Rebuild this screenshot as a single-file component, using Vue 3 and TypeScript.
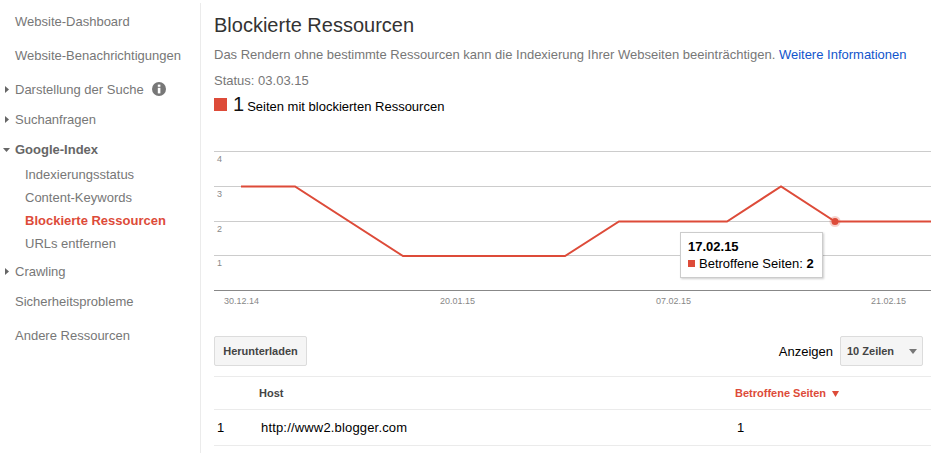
<script setup lang="ts">
interface NavItem {
  label: string
  kind: 'top' | 'tree' | 'open' | 'sub' | 'active'
  arrow?: boolean
  info?: boolean
}
const nav: NavItem[] = [
  { label: 'Website-Dashboard', kind: 'top' },
  { label: 'Website-Benachrichtigungen', kind: 'top' },
  { label: 'Darstellung der Suche', kind: 'tree', arrow: true, info: true },
  { label: 'Suchanfragen', kind: 'tree', arrow: true },
  { label: 'Google-Index', kind: 'open' },
  { label: 'Indexierungsstatus', kind: 'sub' },
  { label: 'Content-Keywords', kind: 'sub' },
  { label: 'Blockierte Ressourcen', kind: 'active' },
  { label: 'URLs entfernen', kind: 'sub' },
  { label: 'Crawling', kind: 'tree', arrow: true },
  { label: 'Sicherheitsprobleme', kind: 'top' },
  { label: 'Andere Ressourcen', kind: 'top' },
]
const grid = [
  { y: 11.5, label: '4', ly: 22 },
  { y: 46.5, label: '3', ly: 57 },
  { y: 81.5, label: '2', ly: 92 },
  { y: 115.5, label: '1', ly: 126 },
]
const xLabels = [
  { x: 10, label: '30.12.14' },
  { x: 226, label: '20.01.15' },
  { x: 442, label: '07.02.15' },
  { x: 657, label: '21.02.15' },
]
const line = '27,46.5 81,46.5 189,116 351,116 405,81.5 513,81.5 567,46.5 621,81.5 717,81.5'
</script>

<template>
  <div class="page">
    <aside class="sidebar">
      <div v-for="item in nav" :key="item.label" class="nav-item" :class="item.kind">
        <svg v-if="item.arrow" class="arrow" width="4" height="7" viewBox="0 0 4 7"><path d="M0 0L4 3.5L0 7Z" /></svg>
        <svg v-if="item.kind === 'open'" class="arrow down" width="7" height="4" viewBox="0 0 7 4"><path d="M0 0H7L3.5 4Z" /></svg>
        <span>{{ item.label }}</span>
        <svg v-if="item.info" class="info" width="14" height="14" viewBox="0 0 14 14">
          <circle cx="7" cy="7" r="7" fill="#777" />
          <rect x="5.8" y="2.6" width="2.6" height="2.2" fill="#fff" />
          <rect x="5.8" y="5.8" width="2.6" height="5.6" fill="#fff" />
        </svg>
      </div>
    </aside>

    <main class="main">
      <h1 class="title">Blockierte Ressourcen</h1>
      <p class="desc">
        Das Rendern ohne bestimmte Ressourcen kann die Indexierung Ihrer Webseiten beeinträchtigen.
        <a class="link">Weitere Informationen</a>
      </p>
      <p class="status">Status: 03.03.15</p>
      <div class="legend">
        <span class="swatch"></span>
        <span class="count">1</span>
        <span class="legend-text">Seiten mit blockierten Ressourcen</span>
      </div>

      <div class="chart">
        <svg width="717" height="170" viewBox="0 0 717 170">
          <line v-for="g in grid" :key="g.y" x1="0" x2="717" :y1="g.y" :y2="g.y" stroke="#ccc" />
          <line x1="0" x2="717" y1="150.5" y2="150.5" stroke="#888" />
          <text v-for="g in grid" :key="g.label" x="3" :y="g.ly" class="axis">{{ g.label }}</text>
          <text v-for="l in xLabels" :key="l.label" :x="l.x" y="164" class="axis">{{ l.label }}</text>
          <polyline :points="line" fill="none" stroke="#dd4b39" stroke-width="2" />
          <circle cx="621" cy="81.5" r="5.5" fill="#dd4b39" opacity="0.25" />
          <circle cx="621" cy="81.5" r="3.5" fill="#dd4b39" />
        </svg>
        <div class="tooltip">
          <div class="tip-date">17.02.15</div>
          <div class="tip-row"><span class="tip-swatch"></span>Betroffene Seiten: <b>2</b></div>
        </div>
      </div>

      <div class="toolbar">
        <button class="btn">Herunterladen</button>
        <div class="show">
          <span>Anzeigen</span>
          <div class="select">
            <span>10 Zeilen</span>
            <svg width="8" height="5" viewBox="0 0 8 5"><path d="M0 0H8L4 5Z" fill="#777" /></svg>
          </div>
        </div>
      </div>

      <table class="table">
        <thead>
          <tr>
            <th class="c-num"></th>
            <th class="c-host">Host</th>
            <th class="c-pages">
              Betroffene Seiten
              <svg class="sort" width="7" height="6" viewBox="0 0 7 6"><path d="M0 0H7L3.5 6Z" fill="#dd4b39" /></svg>
            </th>
          </tr>
        </thead>
        <tbody>
          <tr>
            <td class="c-num">1</td>
            <td class="c-host url">http://www2.blogger.com</td>
            <td class="c-pages val">1</td>
          </tr>
        </tbody>
      </table>
    </main>
  </div>
</template>

<style>
html, body { margin: 0; background: #fff; overflow: hidden; }
</style>

<style scoped>
.page {
  display: flex;
  width: 931px;
  height: 453px;
  font-family: "Liberation Sans", Arial, sans-serif;
  font-size: 13px;
  overflow: hidden;
}
.sidebar {
  box-sizing: border-box;
  width: 201px;
  height: 450px;
  margin-top: 3px;
  padding-top: 1px;
  border-right: 1px solid #ebebeb;
  flex: none;
}
.nav-item {
  position: relative;
  display: flex;
  align-items: center;
  padding-left: 15px;
  color: #777;
}
.top { height: 34px; }
.tree, .open { height: 30px; }
.tree:nth-child(3) { margin-top: 2px; }
.tree:nth-child(10) { margin-top: 1px; margin-bottom: -2px; }
.open { color: #666; font-weight: bold; }
.sub, .active { height: 23px; padding-left: 25px; }
.nav-item:nth-child(6) { margin-top: -1px; }
.active { color: #dd4b39; font-weight: bold; }
.arrow { position: absolute; left: 5px; top: 50%; margin-top: -3.5px; fill: #666; }
.arrow.down { left: 3px; margin-top: -1px; }
.info { margin-left: 8px; }

.main {
  flex: 1;
  min-width: 0;
  padding-left: 13px;
}
.title {
  margin: 13px 0 0;
  font-size: 20px;
  line-height: 25px;
  font-weight: normal;
  color: #333;
}
.desc, .status {
  margin: 0;
  color: #777;
  line-height: 16px;
  white-space: nowrap;
}
.desc { margin-top: 9px; }
.status { margin-top: 10px; }
.link { color: #15c; }
.legend {
  display: flex;
  align-items: baseline;
  margin-top: 4px;
  height: 24px;
}
.swatch {
  width: 13px;
  height: 13px;
  background: #dd4b39;
  align-self: flex-start;
  margin-top: 5px;
}
.count { font-size: 20px; margin-left: 6px; color: #111; }
.legend-text { margin-left: 3px; color: #000; }

.chart {
  position: relative;
  height: 172px;
  margin-top: 23px;
}
.chart svg { display: block; }
.axis {
  font-family: "Liberation Sans", Arial, sans-serif;
  font-size: 9px;
  fill: #888;
}
.tooltip {
  position: absolute;
  left: 466px;
  top: 92px;
  box-sizing: border-box;
  width: 143px;
  height: 46px;
  padding: 6px 7px;
  background: #fff;
  border: 1px solid #ccc;
  box-shadow: 1px 1px 2px rgba(0, 0, 0, 0.2);
  color: #000;
}
.tip-date { font-weight: bold; line-height: 15px; }
.tip-row { line-height: 15px; margin-top: 2px; white-space: nowrap; }
.tip-swatch {
  display: inline-block;
  width: 7px;
  height: 7px;
  background: #dd4b39;
  margin-right: 4px;
  vertical-align: 1px;
}

.toolbar {
  display: flex;
  justify-content: space-between;
  align-items: center;
  height: 30px;
  margin-top: 24px;
  padding-right: 8px;
}
.btn {
  box-sizing: border-box;
  width: 93px;
  height: 30px;
  padding: 0;
  border: 1px solid #dcdcdc;
  border-radius: 2px;
  background: #f5f5f5;
  color: #444;
  font: bold 11px "Liberation Sans", Arial, sans-serif;
}
.show { display: flex; align-items: center; gap: 7px; color: #000; }
.select {
  box-sizing: border-box;
  display: flex;
  align-items: center;
  justify-content: space-between;
  width: 83px;
  height: 30px;
  padding: 0 5px 0 6px;
  border: 1px solid #dcdcdc;
  border-radius: 2px;
  background: #f5f5f5;
  color: #444;
  font-size: 11px;
  font-weight: bold;
}
.table {
  width: 717px;
  margin-top: 10px;
  border-collapse: collapse;
  table-layout: fixed;
  border-top: 1px solid #ebebeb;
}
th {
  height: 32px;
  padding: 0;
  border-bottom: 1px solid #ebebeb;
  text-align: left;
  font-size: 11px;
  font-weight: bold;
  color: #444;
}
td {
  height: 35px;
  padding: 0;
  border-bottom: 1px solid #ebebeb;
  color: #000;
}
.c-num { width: 45px; }
td.c-num { padding-left: 3px; box-sizing: border-box; }
.c-host { width: 476px; }
.url { padding-left: 2px; letter-spacing: 0.17px; }
th.c-pages { color: #dd4b39; }
.val { padding-left: 2px; }
.sort { margin-left: 3px; }
</style>
